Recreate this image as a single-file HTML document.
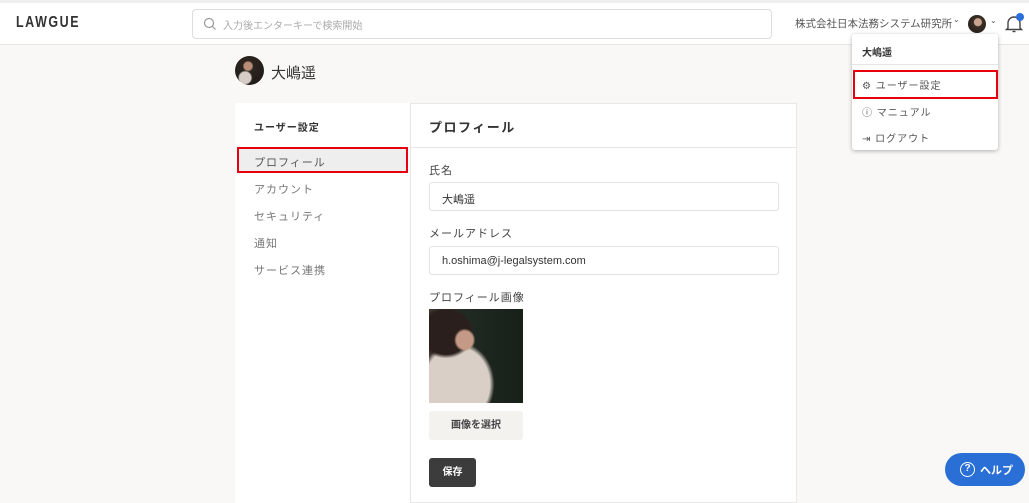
<!DOCTYPE html>
<html><head><meta charset="utf-8"><style>
*{box-sizing:border-box;margin:0;padding:0}
body{width:1029px;height:492px;overflow:hidden;background:#f9f8f6;font-family:"Liberation Sans","Noto Sans CJK JP",sans-serif;color:#333;position:relative}
.abs{position:absolute}
.hdr{left:0;top:0;width:1029px;height:45px;background:#fff;border-top:3px solid #eee;border-bottom:1px solid #e6e6e6}
.logo{left:16px;top:14px;font-size:16px;font-weight:bold;letter-spacing:2px;color:#333;transform:scaleX(.78);transform-origin:left top}
.search{left:192px;top:9px;width:580px;height:30px;border:1px solid #ddd;border-radius:4px;background:#fff}
.card{left:235px;top:103px;width:562px;height:400px;background:#fff;border:1px solid #e8e8e8}
.side{left:235px;top:103px;width:176px;height:400px;background:#fff;border-right:1px solid #e6e6e6}
.t{font-size:11px;color:#777;letter-spacing:1px}
.lbl{font-size:11px;color:#444;letter-spacing:1px}
.inp{left:429px;width:350px;height:29px;border:1px solid #e2e2e2;border-radius:3px;font-size:11px;color:#333;padding:8px 12px}
.red{border:2px solid #e8000f}
</style></head><body>
<div class="abs hdr"></div>
<div class="abs logo">LAWGUE</div>
<div class="abs search"><svg class="abs" style="left:10px;top:7px" width="14" height="14" viewBox="0 0 14 14"><circle cx="6" cy="6" r="4.5" fill="none" stroke="#999" stroke-width="1.2"/><path d="M9.3 9.3L12.5 12.5" stroke="#999" stroke-width="1.2"/></svg><span class="abs" style="left:30px;top:7px;font-size:10px;color:#aaa;white-space:nowrap">入力後エンターキーで検索開始</span></div>
<div class="abs" style="left:795px;top:16px;font-size:10.5px;color:#555;white-space:nowrap">株式会社日本法務システム研究所</div>
<div class="abs" style="left:953px;top:15px;font-size:8px;color:#555">⌄</div>
<div class="abs" style="left:968px;top:15px;width:18px;height:18px;border-radius:50%;background:radial-gradient(circle at 55% 40%,#c9a38d 0 25%,#3a2e26 30%,#1e1a17)"></div>
<div class="abs" style="left:990px;top:16px;font-size:8px;color:#555">⌄</div>
<svg class="abs" style="left:1005px;top:14px" width="18" height="20" viewBox="0 0 18 20"><path d="M3 14V9a6 6 0 0 1 12 0v5l1.5 1.5h-15z" fill="none" stroke="#444" stroke-width="1.4"/><path d="M7.5 17.5h3" stroke="#444" stroke-width="1.4"/></svg>
<div class="abs" style="left:1016px;top:13px;width:8px;height:8px;border-radius:50%;background:#2a6fdb"></div>

<div class="abs" style="left:235px;top:56px;width:29px;height:29px;border-radius:50%;background:radial-gradient(circle at 35% 75%,#d8cdc6 0 20%,transparent 25%),radial-gradient(circle at 45% 35%,#b88d78 0 16%,#2c241f 22%,#1b1815)"></div>
<div class="abs" style="left:271px;top:62px;font-size:15px;color:#333">大嶋遥</div>

<div class="abs card"></div>
<div class="abs side"></div>
<div class="abs" style="left:254px;top:119px;font-size:10px;font-weight:bold;color:#333;letter-spacing:1px">ユーザー設定</div>
<div class="abs red" style="left:237px;top:147px;width:171px;height:26px;background:#eee"></div>
<div class="abs t" style="left:254px;top:154px;color:#555">プロフィール</div>
<div class="abs t" style="left:254px;top:181px">アカウント</div>
<div class="abs t" style="left:254px;top:208px">セキュリティ</div>
<div class="abs t" style="left:254px;top:235px">通知</div>
<div class="abs t" style="left:254px;top:262px">サービス連携</div>

<div class="abs" style="left:411px;top:147px;width:385px;height:1px;background:#e6e6e6"></div>
<div class="abs" style="left:429px;top:117px;font-size:13px;font-weight:bold;color:#333;letter-spacing:1.5px">プロフィール</div>
<div class="abs lbl" style="left:429px;top:162px">氏名</div>
<div class="abs inp" style="top:182px">大嶋遥</div>
<div class="abs lbl" style="left:429px;top:225px">メールアドレス</div>
<div class="abs inp" style="top:246px">h.oshima@j-legalsystem.com</div>
<div class="abs lbl" style="left:429px;top:289px">プロフィール画像</div>
<div class="abs" style="left:429px;top:309px;width:94px;height:94px;background:radial-gradient(ellipse at 38% 33%,#c49a86 0 10%,transparent 13%),radial-gradient(ellipse at 18% 25%,#2a1f1c 0 22%,transparent 26%),radial-gradient(ellipse at 30% 80%,#d9cfc6 0 35%,transparent 40%),linear-gradient(90deg,#3e3530,#1f2a22 40%,#182018)"></div>
<div class="abs" style="left:429px;top:411px;width:94px;height:29px;background:#f3f2ef;border-radius:3px;font-size:10px;font-weight:bold;color:#444;text-align:center;line-height:29px">画像を選択</div>
<div class="abs" style="left:429px;top:458px;width:47px;height:29px;background:#3c3c3c;border-radius:3px;font-size:10px;font-weight:bold;color:#fff;text-align:center;line-height:29px">保存</div>

<div class="abs" style="left:852px;top:34px;width:146px;height:116px;background:#fff;border-radius:3px;box-shadow:0 1px 4px rgba(0,0,0,.3)"></div>
<div class="abs" style="left:862px;top:44px;font-size:10px;font-weight:bold;color:#333">大嶋遥</div>
<div class="abs" style="left:852px;top:64px;width:146px;height:1px;background:#e6e6e6"></div>
<div class="abs red" style="left:853px;top:70px;width:145px;height:29px"></div>
<div class="abs" style="left:862px;top:77px;font-size:10px;color:#555;letter-spacing:1px">⚙ ユーザー設定</div>
<div class="abs" style="left:862px;top:104px;font-size:10px;color:#555;letter-spacing:1px">ⓘ マニュアル</div>
<div class="abs" style="left:862px;top:130px;font-size:10px;color:#555;letter-spacing:1px">⇥ ログアウト</div>

<div class="abs" style="left:945px;top:453px;width:80px;height:33px;border-radius:17px;background:#2a6fd6"></div>
<div class="abs" style="left:960px;top:462px;width:15px;height:15px;border:1.5px solid #fff;border-radius:50%;color:#fff;font-size:10px;font-weight:bold;line-height:12px;text-align:center">?</div>
<div class="abs" style="left:980px;top:462px;color:#fff;font-size:11px;font-weight:bold">ヘルプ</div>
</body></html>
